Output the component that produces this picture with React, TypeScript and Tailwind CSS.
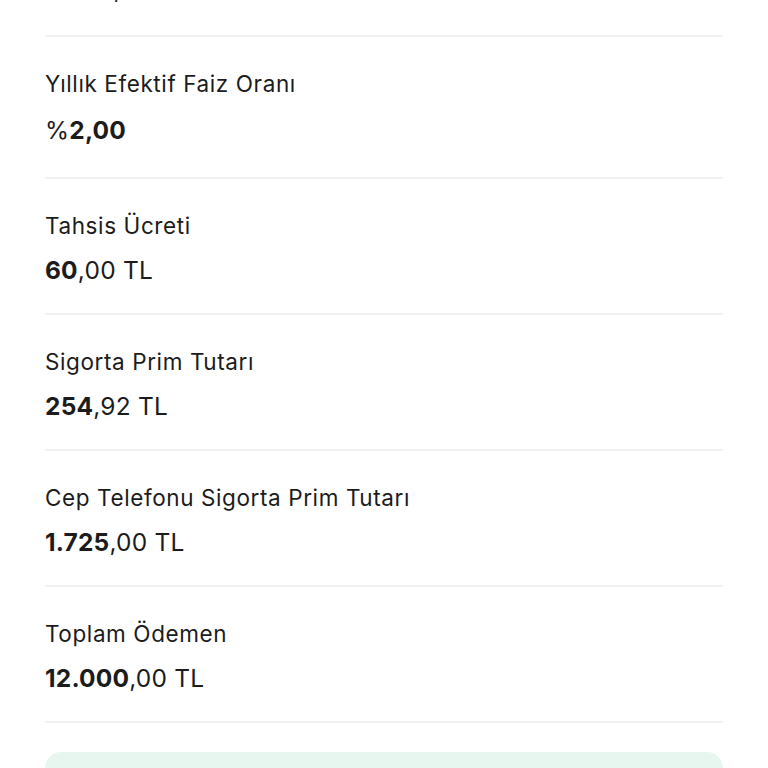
const rows = [
  { label: "Yıllık Efektif Faiz Oranı", pre: "%", bold: "2,00", rest: "" },
  { label: "Tahsis Ücreti", pre: "", bold: "60", rest: ",00 TL" },
  { label: "Sigorta Prim Tutarı", pre: "", bold: "254", rest: ",92 TL" },
  { label: "Cep Telefonu Sigorta Prim Tutarı", pre: "", bold: "1.725", rest: ",00 TL" },
  { label: "Toplam Ödemen", pre: "", bold: "12.000", rest: ",00 TL" },
];

export default function App() {
  return (
    <div className="min-h-screen bg-white overflow-hidden font-['Inter',sans-serif] text-[#1c1c1c]">
      <div className="-mt-[26px] px-[45px]">
        <div className="border-b-2 border-[#f1f1f1] pb-[31px]">
          <p className="text-[25px] leading-[30px]">
            <span className="font-bold">1.200</span>,00 TL
          </p>
        </div>

        {rows.map((row, i) => (
          <div
            key={row.label}
            className={
              i === 0
                ? "border-b-2 border-[#f1f1f1] pt-[33px] pb-[32px]"
                : "border-b-2 border-[#f1f1f1] pt-[33px] pb-[28px]"
            }
          >
            <p className="text-[22.5px] leading-[28px] tracking-[0.6px]">{row.label}</p>
            <p
              className={
                i === 0
                  ? "mt-[17px] text-[24.5px] leading-[30px] tracking-[0.2px]"
                  : "mt-[15px] text-[24.5px] leading-[30px] tracking-[0.2px]"
              }
            >
              {row.pre}
              <span className="font-bold">{row.bold}</span>
              {row.rest}
            </p>
          </div>
        ))}

        <div className="mt-[29px] h-[120px] rounded-2xl bg-[#e7f6ef]" />
      </div>
    </div>
  );
}
